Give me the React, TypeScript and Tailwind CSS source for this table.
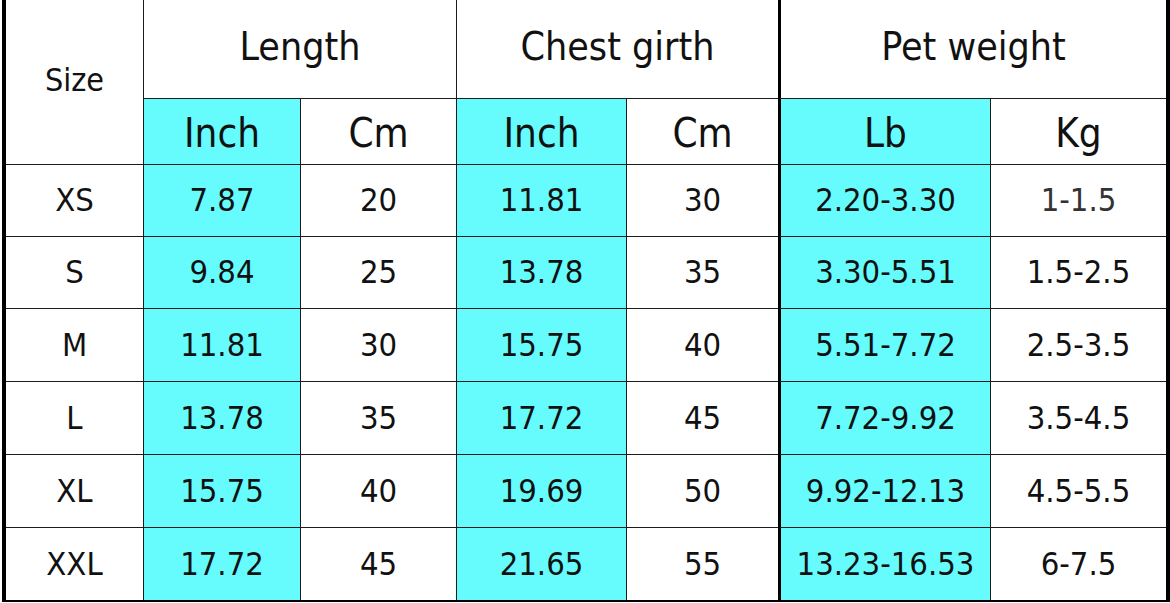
import React from 'react';

const rows = [
  ['XS', '7.87', '20', '11.81', '30', '2.20-3.30', '1-1.5'],
  ['S', '9.84', '25', '13.78', '35', '3.30-5.51', '1.5-2.5'],
  ['M', '11.81', '30', '15.75', '40', '5.51-7.72', '2.5-3.5'],
  ['L', '13.78', '35', '17.72', '45', '7.72-9.92', '3.5-4.5'],
  ['XL', '15.75', '40', '19.69', '50', '9.92-12.13', '4.5-5.5'],
  ['XXL', '17.72', '45', '21.65', '55', '13.23-16.53', '6-7.5'],
];

// cyan columns: Inch, Inch, Lb
const cyan = [false, true, false, true, false, true, false];

const cell = 'flex items-center justify-center border-t border-[#1c1c1c]';

export default function App() {
  return (
    <div className="w-[1170px] h-[603px] bg-white pl-[2px] text-[#111]" style={{ fontFamily: '"DejaVu Sans Condensed", "DejaVu Sans", sans-serif' }}>
      <div className="w-[1168px] h-[602px] border-l-4 border-r-4 border-b-2 border-black">
        <div className="grid grid-cols-[137px_157px_156px_170px_152px_212px_176px] grid-rows-[98px_66px_72px_72px_73px_73px_73px_73px]">
          {/* header */}
          <div className="row-span-2 flex items-center justify-center text-[32px] pb-[4px]">Size</div>
          <div className="col-span-2 flex items-center justify-center border-l border-[#1c1c1c] text-[39px] pb-[4px]">Length</div>
          <div className="col-span-2 flex items-center justify-center border-l border-[#1c1c1c] text-[39px] pb-[4px]">Chest girth</div>
          <div className="col-span-2 flex items-center justify-center border-l-[3px] border-black text-[39px] pb-[4px]">Pet weight</div>

          {/* sub header */}
          <div className={`${cell} border-l bg-[#66fcfe] text-[40px] pt-[2px]`}>Inch</div>
          <div className={`${cell} border-l text-[40px] pt-[2px]`}>Cm</div>
          <div className={`${cell} border-l bg-[#66fcfe] text-[40px] pt-[2px]`}>Inch</div>
          <div className={`${cell} border-l text-[40px] pt-[2px]`}>Cm</div>
          <div className={`${cell} border-l-[3px] border-l-black bg-[#66fcfe] text-[40px] pt-[2px]`}>Lb</div>
          <div className={`${cell} border-l text-[40px] pt-[2px]`}>Kg</div>

          {rows.map((r) =>
            r.map((v, i) => (
              <div
                key={r[0] + i}
                className={`${cell} text-[32.5px] ${cyan[i] ? 'bg-[#66fcfe]' : ''} ${
                  i === 0 ? '' : i === 5 ? 'border-l-[3px] border-l-black' : 'border-l'
                } ${i === 6 && r[0] === 'XS' ? 'text-[#333]' : ''}`}
              >
                {v}
              </div>
            ))
          )}
        </div>
      </div>
    </div>
  );
}
